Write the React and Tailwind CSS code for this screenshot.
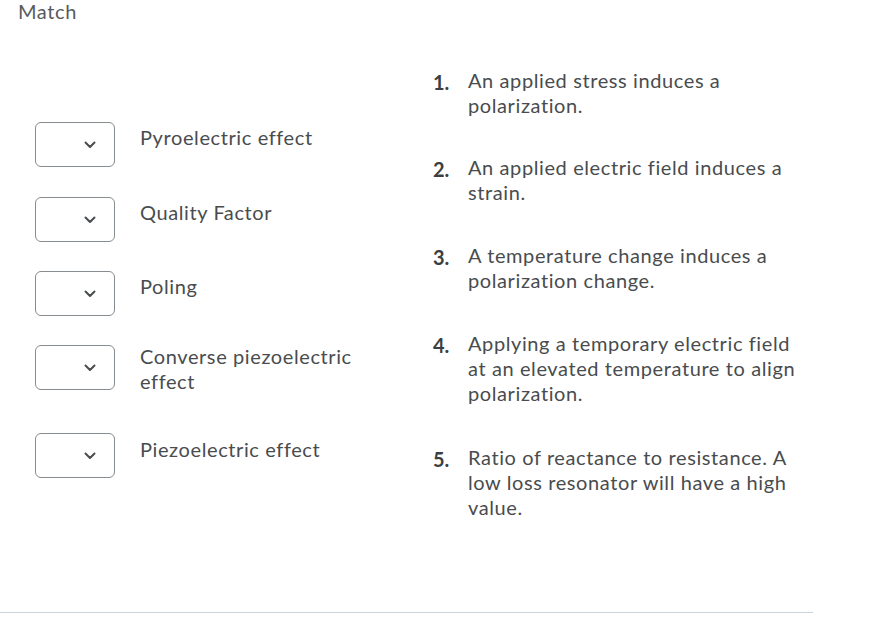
const leftRows = [
  { label: ['Pyroelectric effect'], rowMt: 'mt-[98px]', boxMt: 'mt-0', textMt: 'mt-[3px]' },
  { label: ['Quality Factor'], rowMt: 'mt-[30px]', boxMt: 'mt-0', textMt: 'mt-[3px]' },
  { label: ['Poling'], rowMt: 'mt-[29px]', boxMt: 'mt-0', textMt: 'mt-[3px]' },
  { label: ['Converse piezoelectric', 'effect'], rowMt: 'mt-[28px]', boxMt: 'mt-[1px]', textMt: 'mt-0' },
  { label: ['Piezoelectric effect'], rowMt: 'mt-[39px]', boxMt: 'mt-0', textMt: 'mt-[4px]' },
];

const rightItems = [
  { n: 1, lines: ['An applied stress induces a', 'polarization.'], mt: 'mt-[44px]' },
  { n: 2, lines: ['An applied electric field induces a', 'strain.'], mt: 'mt-[37px]' },
  { n: 3, lines: ['A temperature change induces a', 'polarization change.'], mt: 'mt-[38px]' },
  { n: 4, lines: ['Applying a temporary electric field', 'at an elevated temperature to align', 'polarization.'], mt: 'mt-[38px]' },
  { n: 5, lines: ['Ratio of reactance to resistance. A', 'low loss resonator will have a high', 'value.'], mt: 'mt-[39px]' },
];

const Chevron = () => (
  <svg width="12" height="8" viewBox="0 0 12 8" fill="none">
    <path d="M1.5 1.5 L6 6 L10.5 1.5" stroke="#494c4e" strokeWidth="2" strokeLinecap="round" strokeLinejoin="round" />
  </svg>
);

const SelectBox = ({ className }) => (
  <div className={`w-[80px] h-[45px] shrink-0 rounded-[6px] border border-[#868c8f] bg-white flex items-center justify-end pr-[18px] ${className}`}>
    <Chevron />
  </div>
);

export default function App() {
  return (
    <div className="min-h-[622px] w-[884px] bg-white text-[#494c4e] text-[20px] leading-[25px] tracking-[0.6px]" style={{ fontFamily: 'Lato, "Noto Sans", sans-serif' }}>
      <div className="-mt-px pl-[18px] text-[#565a5c]">Match</div>

      <div className="flex">
        {/* left: dropdowns and terms */}
        <div className="w-[433px] pl-[35px] flex flex-col">
          {leftRows.map((row, i) => (
            <div key={i} className={`flex items-start ${row.rowMt}`}>
              <SelectBox className={row.boxMt} />
              <div className={`ml-[25px] ${row.textMt}`}>
                {row.label.map((l, j) => (
                  <div key={j}>{l}</div>
                ))}
              </div>
            </div>
          ))}
        </div>

        {/* right: numbered definitions */}
        <div className="flex flex-col">
          {rightItems.map((item) => (
            <div key={item.n} className={`flex items-start ${item.mt}`}>
              <div className="w-[35px] shrink-0 font-bold mt-[2px] text-[#3c3f41] tracking-normal">{item.n}.</div>
              <div>
                {item.lines.map((l, j) => (
                  <div key={j}>{l}</div>
                ))}
              </div>
            </div>
          ))}
        </div>
      </div>

      <div className="mt-[92px] w-[813px] h-px bg-[#cdd3da]" />
    </div>
  );
}
